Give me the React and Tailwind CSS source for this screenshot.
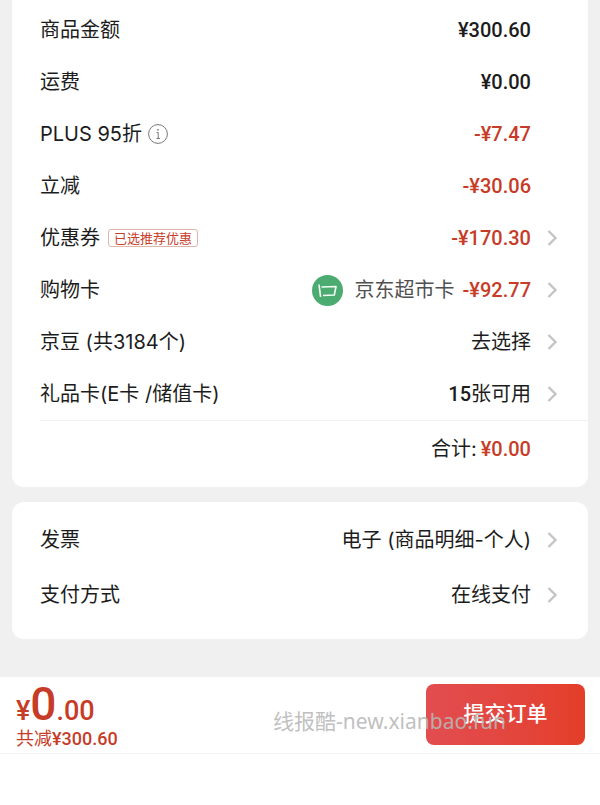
const PRICE_ROWS = [
  { label: '商品金额', value: '¥300.60' },
  { label: '运费', value: '¥0.00' },
  { label: 'PLUS 95折', value: '-¥7.47', red: true, info: true },
  { label: '立减', value: '-¥30.06', red: true },
  { label: '优惠券', value: '-¥170.30', red: true, tag: '已选推荐优惠', link: true },
  { label: '购物卡', value: '-¥92.77', red: true, card: '京东超市卡', link: true },
  { label: '京豆 (共3184个)', text: '去选择', link: true },
  { label: '礼品卡(E卡 /储值卡)', value: '15', text: '张可用', link: true },
];

const ORDER_ROWS = [
  { label: '发票', text: '电子 (商品明细-个人)', link: true },
  { label: '支付方式', text: '在线支付', link: true },
];

export default function App() {
  return (
    <div className="relative flex min-h-screen flex-col bg-[#f0f0f0] font-['Inter','Noto_Sans_CJK_SC',sans-serif] text-xl text-[#1c1c1c]">
      <main className="px-3">
        {/* Price breakdown */}
        <section className="rounded-b-xl bg-white pt-1 pb-[11px] pl-7">
          {PRICE_ROWS.map((row) => (
            <Row key={row.label} row={row} size="h-[52px]" />
          ))}
          <div className="flex h-14 items-center justify-end border-t border-[#f2f2f2] pr-[57px]">
            <span>合计:</span>
            <Amount value="¥0.00" red className="ml-1" />
          </div>
        </section>

        {/* Invoice and payment */}
        <section className="mt-[15px] rounded-xl bg-white pt-2.5 pb-[17px] pl-7">
          {ORDER_ROWS.map((row) => (
            <Row key={row.label} row={row} size="h-[55px]" />
          ))}
        </section>
      </main>

      <footer className="mt-auto bg-white pb-[51px]">
        <div className="relative flex h-[77px] items-center justify-between border-b border-[#f4f4f4] pr-[15px] pl-4 text-[#c63c27]">
          <div>
            <p className="pt-1 font-['Roboto',sans-serif] text-[27px] leading-9 font-medium">
              ¥<span className="text-[46px]">0</span>.00
            </p>
            <p className="font-['Roboto','Noto_Sans_CJK_SC',sans-serif] text-lg leading-5">
              共减<span className="font-medium">¥300.60</span>
            </p>
          </div>
          <button
            type="button"
            className="mb-0.5 h-[61px] w-[159px] rounded-lg bg-gradient-to-r from-[#e24d50] to-[#e43e28] text-[21px] font-medium text-white"
          >
            提交订单
          </button>
          <span className="pointer-events-none absolute top-[30px] left-[273px] font-['Noto_Sans','Noto_Sans_CJK_SC',sans-serif] text-[21px] leading-7 text-[#b8b8b8]/90">
            线报酷-new.xianbao.fun
          </span>
        </div>
      </footer>
    </div>
  );
}

function Row({ row, size }) {
  const Tag = row.link ? 'button' : 'div';
  return (
    <Tag className={`flex w-full items-center pr-[30px] text-left ${size}`}>
      <span>{row.label}</span>
      {row.info && <InfoIcon />}
      {row.tag && (
        <span className="ml-2 rounded-[3px] border border-[#dfb5ab] px-[5px] text-[13px] leading-4 text-[#c8402c]">
          {row.tag}
        </span>
      )}
      <span className="ml-auto flex items-center">
        {row.card && (
          <>
            <MarketIcon />
            <span className="mr-2 ml-3 text-[#505050]">{row.card}</span>
          </>
        )}
        {row.value && <Amount value={row.value} red={row.red} />}
        {row.text && <span>{row.text}</span>}
      </span>
      <span className="ml-4 w-[11px]">{row.link && <Chevron />}</span>
    </Tag>
  );
}

function Amount({ value, red, className = '' }) {
  return (
    <span className={`font-['Roboto',sans-serif] font-medium ${red ? 'text-[#c63c27]' : ''} ${className}`}>
      {value}
    </span>
  );
}

function InfoIcon() {
  return (
    <svg width="20" height="20" viewBox="0 0 20 20" fill="none" stroke="#777" className="ml-1.5">
      <circle cx="10" cy="10" r="9.4" />
      <path d="M8.6 8.5 H10.2 V14.5 M8.4 14.5 H12" />
      <circle cx="10" cy="5.8" r="0.9" fill="#777" stroke="none" />
    </svg>
  );
}

function Chevron() {
  return (
    <svg width="11" height="16" viewBox="0 0 11 16" fill="none" stroke="#c4c4c4" strokeWidth="2.4">
      <path d="M1.5 1 L8.5 8 L1.5 15" />
    </svg>
  );
}

function MarketIcon() {
  return (
    <svg width="31" height="31" viewBox="0 0 31 31" fill="none">
      <circle cx="15.5" cy="15.5" r="15.5" fill="#4bab70" />
      <path
        d="M7 9.5 L8.6 21.8 M9.5 12 L24 11.5 L22.3 20 L11 20.5"
        stroke="#f4fff6"
        strokeWidth="1.6"
        strokeLinejoin="round"
      />
    </svg>
  );
}
